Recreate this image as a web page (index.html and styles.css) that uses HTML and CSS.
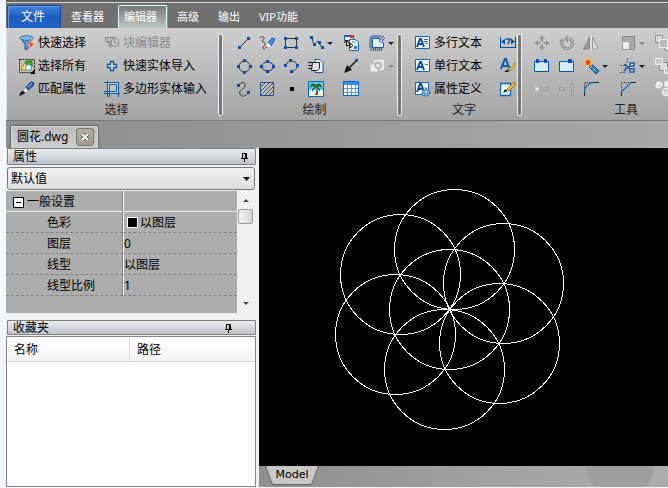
FILE: index.html
```html
<!DOCTYPE html>
<html lang="zh-CN">
<head>
<meta charset="utf-8">
<title>圆花.dwg</title>
<link rel="stylesheet" href="styles.css">
</head>
<body>
<nav class="tabs">
  <button class="file-tab">文件</button>
  <button class="tab">查看器</button>
  <button class="tab active">编辑器</button>
  <button class="tab">高级</button>
  <button class="tab">输出</button>
  <button class="tab">VIP功能</button>
</nav>

<div class="ribbon">
  <section class="group select-group">
    <div class="tools">
      <button class="tool"><svg class="icon" viewBox="0 0 16 16"><path d="M1 3l5 6v5l3 1V9l5-6z" fill="#4c94c8" stroke="#1d5f97"/><ellipse cx="7.500" cy="3" rx="6.500" ry="2.300" fill="#7fbce0" stroke="#2c73a8"/><path d="M13 4L8 10h3l-2 6 7-8h-4l3-4z" fill="#f04636" stroke="#fff" stroke-width=".5"/></svg>快速选择</button>
      <button class="tool off"><svg class="icon" viewBox="0 0 16 16"><path d="M1.500 2.500h9v4h-9z" fill="#bbb" stroke="#888"/><path d="M3 7l3 6 2-1-2-5z" fill="#999"/><circle cx="11" cy="7.500" r="4" fill="#ccc" stroke="#858585"/><path d="M10.500 5v3h3" fill="none" stroke="#888"/></svg>块编辑器</button>
      <button class="tool"><svg class="icon" viewBox="0 0 16 16"><path d="M.5 1.500h15v13H.5z" fill="none" stroke="#222" stroke-dasharray="2 1"/><path d="M7 3h6v6H7z" fill="#43a832" stroke="#19751a"/><path d="M6 4l3 8H2z" fill="#ffe66a" stroke="#ad8616"/><circle cx="9.500" cy="9.500" r="3" fill="#e5f6ff" stroke="#4b91be"/><path d="M11 16h5v-5z" fill="#000"/></svg>选择所有</button>
      <button class="tool"><svg class="icon" viewBox="0 0 16 16"><path d="M6.500 3.500h3v3h3v3h-3v3h-3v-3h-3v-3h3z" fill="#e8f2ff" stroke="#104e9e" stroke-width="1.300"/></svg>快速实体导入</button>
      <button class="tool"><svg class="icon" viewBox="0 0 16 16"><path d="M0 15c1-4 3-6 5-5s2 3-5 5z" fill="#222"/><path d="M4 10l3 2 3-3-3-3z" fill="#f3f3f3" stroke="#777" stroke-width=".7"/><path d="M7 6l5-5 3 1-1 3-5 4z" fill="#2b65b2" stroke="#163d79"/><path d="M9 6l4-4" stroke="#8cc9ff"/></svg>匹配属性</button>
      <button class="tool"><svg class="icon" viewBox="0 0 16 16"><path d="M4 2h10v10H4z" fill="#c9dcf0"/><path d="M6 4h6v6H6z" fill="#c2c4c6"/><path d="M3.500 0v16M0 12.500h16M5.500 4v12M0 10.500h12M0 1.500h14.500V16M5 3.500h7.500V11" fill="none" stroke="#0a57a8"/></svg>多边形实体输入</button>
    </div>
    <h2>选择</h2>
  </section>

  <section class="group draw-group">
    <div class="tools">
      <button class="tool" aria-label="直线"><svg class="icon" viewBox="0 0 16 16"><path class="ink" d="M4 12L12 4"/><path class="node" d="M2 11h3v3H2zM11 2h3v3h-3z"/></svg></button>
      <button class="tool" aria-label="徒手画"><svg class="icon" viewBox="0 0 16 16"><path class="ink" d="M1 3c1-2 4-2 4 0s-3 3-1 4 3 2 1 4-1 3 1 3"/><path d="M9 8l4-5 3 1-4 7z" fill="#3b91ef" stroke="#1d64b2"/><path d="M9 8l3 3-3 2-2-2z" fill="#fff" stroke="#bbb" stroke-width=".6"/><path d="M6 13l1-2 2 2z" fill="#e03838"/></svg></button>
      <button class="tool" aria-label="矩形"><svg class="icon" viewBox="0 0 16 16"><path class="ink" d="M2.500 3.500h11v9h-11z"/><path class="node" d="M1 2h3v3H1zM12 2h3v3h-3zM1 11h3v3H1zM12 11h3v3h-3z"/></svg></button>
      <button class="tool" aria-label="多段线"><svg class="icon" viewBox="0 0 16 16"><path class="ink" d="M4 3l2 7 4-4 4 7"/><path class="node" d="M2 1h3v3H2zM5 8h3v3H5zM10 6h3v3h-3zM13 11h3v3h-3z"/></svg><i class="arrow"></i></button>
      <button class="tool" aria-label="插入块"><svg class="icon" viewBox="0 0 16 16"><path d="M1.500.5h9v5h-9z" fill="#fff" stroke="#1564ba"/><path d="M1 0h6v2H1z" fill="#1564ba"/><path d="M7 0h4v3H7z" fill="#e43127"/><path d="M6.500 4.500h6l3 3v8h-9z" fill="#edf5ff" stroke="#1564ba"/><path d="M3.500 5v5.500H7M1 8l2.500-3L6 8M7 8v5l3-2.500z" fill="none" stroke="#111"/><path d="M11 11h3v3h-3z" fill="#2b7ad2"/><path d="M9 7h3" stroke="#2b7ad2"/></svg></button>
      <button class="tool" aria-label="创建块"><svg class="icon" viewBox="0 0 16 16"><path d="M2 1v2M4 0v3M6 0v3M8 0v3M10 0v3M12 0v2M0 4h3M0 6h3M0 8h3M0 10h3M0 12h3M3 13l-2 3M5 13l-1 3M7 13l-1 3M9 13l-1 3M11 13l-1 3M13 13l-1 3M11 5l4-4M13 6l3-3" stroke="#1b4e91"/><path d="M3.500 3.500h7c-1 3 1 4 4 4v5h-11z" fill="#e9f3ff" stroke="#0c61bf"/></svg><i class="arrow"></i></button>

      <button class="tool" aria-label="圆"><svg class="icon" viewBox="0 0 16 16"><circle class="ink" cx="8.500" cy="8.500" r="5.500"/><path class="node" d="M7 1h3v3H7zM7 13h3v3H7zM1 7h3v3H1zM13 7h3v3h-3z"/></svg></button>
      <button class="tool" aria-label="椭圆"><svg class="icon" viewBox="0 0 16 16"><ellipse class="ink" cx="8.500" cy="8.500" rx="6" ry="4.500"/><path class="node" d="M7 2h3v3H7zM7 12h3v3H7zM1 7h3v3H1zM13 7h3v3h-3z"/></svg></button>
      <button class="tool" aria-label="圆弧"><svg class="icon" viewBox="0 0 16 16"><path class="ink" d="M3 7c2-6 11-5 11 1 0 4-3 5-6 5"/><path class="node" d="M1 6h3v3H1zM6 1h3v3H6zM13 6h3v3h-3zM7 12h3v3H7z"/></svg></button>
      <button class="tool" aria-label="多行"><svg class="icon" viewBox="0 0 16 16"><path d="M7 1.500h5l3 3v10H7z" fill="#e6f2ff" stroke="#1b5ca9"/><path d="M4.500 4.500h7v6l-2 2h-6z" fill="#e2e2e2" stroke="#222"/><path d="M0 4.500h4M0 7.500h4M0 10.500h4" stroke="#222"/></svg></button>
      <button class="tool" aria-label="箭头"><svg class="icon" viewBox="0 0 16 16"><path d="M4 12l9-9" stroke="#111" stroke-width="1.500"/><path d="M1 15l3-8 5 5z" fill="#111"/><path class="node" d="M12 1h3v3h-3z"/></svg></button>
      <button class="tool off" aria-label="区域"><svg class="icon" viewBox="0 0 16 16"><path d="M5.500 2.500h9v9h-9z" fill="#ddd" stroke="#f0f0f0"/><path d="M1 6h8v8H1z" fill="#ececec" stroke="#bbb"/><circle cx="9" cy="7.500" r="3" fill="#ddd" stroke="#999"/></svg><i class="arrow"></i></button>

      <button class="tool" aria-label="样条曲线"><svg class="icon" viewBox="0 0 16 16"><path class="ink" d="M3 4c2-4 7-3 6 1S2 9 4 13s6 2 8-1"/><path class="node" d="M1 3h3v3H1zM11 10h3v3h-3z"/></svg></button>
      <button class="tool" aria-label="填充"><svg class="icon" viewBox="0 0 16 16"><path d="M1.500 1.500h13v13h-13z" fill="#c4c4c4" stroke="#164f94"/><path d="M2 6l4-4M2 10l8-8M2 14L14 2M6 14l8-8M10 14l4-4" stroke="#444"/></svg></button>
      <button class="tool" aria-label="点"><svg class="icon" viewBox="0 0 16 16"><path d="M7 6h4v4H7z"/></svg></button>
      <button class="tool" aria-label="图像"><svg class="icon" viewBox="0 0 16 16"><path d="M.5.500h15v15H.5z" fill="#dff5ff" stroke="#0667bd"/><path d="M1 1h14v8H1z" fill="#6cc3ea"/><path d="M1 13h14v2H1z" fill="#f6f4c6"/><path d="M8 5c1 4 0 7-1 9h3c0-3 0-6-1-9" fill="#754e20"/><path d="M8 4C5 1 2 3 2 7c2-2 3-2 5-1-3 1-3 3-3 5 2-3 3-4 5-5 1 2 2 3 3 5 0-2 0-4-2-5 2-1 3 0 4 2 0-5-3-7-6-4z" fill="#156b35"/></svg></button>
      <button class="tool" aria-label="表格"><svg class="icon" viewBox="0 0 16 16"><path d="M.5.500h15v14H.5z" fill="#fff" stroke="#0867c9"/><path d="M1 1h14v3H1z" fill="#2f8eea"/><path d="M1 7.500h14M1 11.500h14M4.500 4v10M8.500 4v10M12.500 4v10" stroke="#509fe4"/></svg></button>
    </div>
    <h2>绘制</h2>
  </section>

  <section class="group text-group">
    <div class="tools">
      <button class="tool"><svg class="icon" viewBox="0 0 16 16"><path class="sheet" d="M.5 1.500h14v12H.5z"/><path class="letter" d="M2 12l3-8h1l3 8M3 9h5"/><path d="M9 4.500h4M9 6.500h4M10 8.500h3" stroke="#3273b8"/></svg>多行文本</button>
      <button class="tool" aria-label="标注"><svg class="icon" viewBox="0 0 16 16"><path d="M.5 2v11M15.500 2v11M0 12.500h16" stroke="#0750a5"/><path d="M1 6.500l4-3v6zM15 6.500l-4-3v6z" fill="#0750a5"/><path d="M6 4h4L8 9" fill="none" stroke="#0750a5" stroke-width="1.500"/></svg></button>
      <button class="tool"><svg class="icon" viewBox="0 0 16 16"><path class="sheet" d="M.5 1.500h14v12H.5z"/><path class="letter" d="M2 12l3-8h1l3 8M3 9h5"/><path d="M10 6.500h3" stroke="#3273b8"/></svg>单行文本</button>
      <button class="tool" aria-label="文字样式"><svg class="icon" viewBox="0 0 16 16"><path d="M1 11L5 1h1l3 9M3 8h5" fill="none" stroke="#0759b0" stroke-width="2"/><path d="M4 14l4-3 1 3z" fill="#222"/><path d="M9 11l6-6 1 2-6 6z" fill="#f8bd2c" stroke="#8b5b12" stroke-width=".6"/></svg></button>
      <button class="tool"><svg class="icon" viewBox="0 0 16 16"><path class="sheet" d="M.5 1.500h13v12H.5z"/><path class="letter" d="M2 11l3-8h1l3 8M3 8h5"/><circle cx="11" cy="11" r="3.500" fill="#eaf5ff" stroke="#276eb9" stroke-width="2" stroke-dasharray="2 1"/><circle cx="11" cy="11" r="2" fill="#c6e2fa" stroke="#276eb9"/></svg>属性定义</button>
      <button class="tool" aria-label="编辑文字"><svg class="icon" viewBox="0 0 16 16"><path d="M.5 2.500h10v12H.5z" fill="#edf7ff" stroke="#1163b7" stroke-width="1.300"/><path d="M3 12l2-4 3 2z" fill="#222"/><path d="M7 8l7-7 2 2-7 7z" fill="#f6b92c" stroke="#8a5919" stroke-width=".7"/></svg></button>
    </div>
    <h2>文字</h2>
  </section>

  <section class="group edit-group">
    <div class="tools">
      <button class="tool off" aria-label="移动"><svg class="icon" viewBox="0 0 16 16"><path d="M8 3v10M3 8h10" stroke="#888" stroke-width="1.500"/><path d="M5 4l3-4 3 4zM5 12l3 4 3-4zM4 5L0 8l4 3zM12 5l4 3-4 3z" fill="#999"/><path d="M6.500 6.500h3v3h-3z" fill="#ccc"/></svg></button>
      <button class="tool off" aria-label="旋转"><svg class="icon" viewBox="0 0 16 16"><path d="M2.500 7c0 9 11 9 11 1 0-3-2-4-4-4" fill="none" stroke="#909090" stroke-width="3"/><path d="M2.500 7c0 9 11 9 11 1 0-3-2-4-4-4" fill="none" stroke="#bbb"/><path d="M9 0v8L5 4zM0 7l3-4 3 4z" fill="#999"/></svg></button>
      <button class="tool off" aria-label="镜像"><svg class="icon" viewBox="0 0 16 16"><path d="M6.500 2v12h-6z" fill="#999" stroke="#888"/><path d="M9.500 2v12h6z" fill="#ddd" stroke="#999"/><path d="M8 0v16" stroke="#eee"/></svg></button>
      <button class="tool off" aria-label="缩放"><svg class="icon" viewBox="0 0 16 16"><path d="M2.500 1.500h12v13h-12z" fill="#aaa" stroke="#888"/><path d="M2.500 6.500h7v8h-7z" fill="#eee" stroke="#777" stroke-dasharray="1 1"/></svg><i class="arrow"></i></button>
      <button class="tool off" aria-label="前置"><svg class="icon" viewBox="0 0 16 16"><path class="gray" d="M.5.500h7v7h-7zM9.500 9.500h6v6h-6z"/><path d="M4.500 4.500h8v8h-8z" fill="#bbb" stroke="#eee"/></svg></button>

      <button class="tool" aria-label="组合"><svg class="icon" viewBox="0 0 16 16"><path d="M.5 3.500h14v10H.5z" fill="#d6eaff" stroke="#0b55ad"/><path class="node" d="M2 1h3v4H2zM10 1h3v4h-3z"/></svg></button>
      <button class="tool" aria-label="解组"><svg class="icon" viewBox="0 0 16 16"><path d="M.5 3.500h14v10H.5z" fill="#d6eaff" stroke="#0b55ad"/><path class="node" d="M9 1h4v4H9z"/></svg></button>
      <button class="tool" aria-label="分解"><svg class="icon" viewBox="0 0 16 16"><circle cx="5" cy="4.500" r="3.500" fill="#f36a24" stroke="#ffd35e" stroke-width="2" stroke-dasharray="2 1"/><circle cx="5" cy="4.500" r="2" fill="#e0401c"/><path d="M6 9l4-2 6 6-3 3z" fill="#3387ba" stroke="#124f7c"/><path d="M9 8l-2 2M12 11l-2 2" stroke="#a7dcfa"/></svg><i class="arrow"></i></button>
      <button class="tool" aria-label="修剪"><svg class="icon shift" viewBox="0 0 16 16"><path d="M8 0L4 14M0 7.500h5M0 14.500h5" stroke="#555" stroke-dasharray="2 1"/><path d="M4 6l7 6M4 13l7-6" stroke="#165aa7" stroke-width="1.500"/><path d="M10 5h4v3h-4zM10 11h4v3h-4z" fill="#fff" stroke="#165aa7" stroke-width="1.500"/></svg><i class="arrow"></i></button>
      <button class="tool off" aria-label="后置"><svg class="icon" viewBox="0 0 16 16"><path class="gray" d="M4.500 4.500h8v8h-8z"/><path d="M.5.500h7v6h-7zM9.500 9.500h6v6h-6z" fill="#ccc" stroke="#eee"/></svg></button>

      <button class="tool off" aria-label="打断"><svg class="icon" viewBox="0 0 16 16"><path d="M1.500 6.500h3v3h-3z" fill="#f4f4f4" stroke="#ccc"/><path d="M11.500 6.500h3v3h-3z" fill="#bbb" stroke="#999"/><path d="M6 6.500h4M6 9.500h4" stroke="#999" stroke-dasharray="1 1"/></svg></button>
      <button class="tool off" aria-label="延伸"><svg class="icon" viewBox="0 0 16 16"><path d="M.5 6.500h4v3h-4zM12.500 2.500h2v12h-2z" fill="#bbb" stroke="#999"/><path d="M6 6.500h6M6 9.500h6" stroke="#999" stroke-dasharray="1 1"/></svg></button>
      <button class="tool" aria-label="圆角"><svg class="icon" viewBox="0 0 16 16"><path d="M1.500 11V1.500H10" fill="none" stroke="#333" stroke-dasharray="1 1"/><path d="M1.500 15v-4M11 1.500h5" stroke="#222"/><path d="M1.500 11C2 5 5 2 11 1.500" fill="none" stroke="#1677d5" stroke-width="1.500"/></svg></button>
      <button class="tool" aria-label="倒角"><svg class="icon" viewBox="0 0 16 16"><path d="M1.500 11V1.500H10" fill="none" stroke="#333" stroke-dasharray="1 1"/><path d="M1.500 15v-4M11 1.500h5" stroke="#222"/><path d="M1.500 11L11 1.500" stroke="#1677d5" stroke-width="1.500"/></svg></button>
      <button class="tool off" aria-label="对齐"><svg class="icon" viewBox="0 0 16 16"><circle cx="4" cy="4" r="3.500" fill="#eee"/><circle cx="12" cy="3" r="3" fill="#eee"/><circle cx="11" cy="11" r="4" fill="#ddd" stroke="#eee"/><path d="M4 4l7 7" stroke="#aaa"/></svg></button>
    </div>
    <h2>工具</h2>
  </section>
</div>

<div class="documents">
  <div class="document">
    <span>圆花.dwg</span>
    <button class="close" aria-label="关闭"><svg viewBox="0 0 10 10"><path d="M2 2l6 6M8 2L2 8" stroke="#555" stroke-width="3.500"/><path d="M2 2l6 6M8 2L2 8" stroke="#fff" stroke-width="2"/></svg></button>
  </div>
</div>

<main class="workspace">
  <aside class="side">
    <section class="properties">
      <header class="panel-title"><h2>属性</h2><button class="pin" aria-label="固定属性"><svg viewBox="0 0 9 10"><path d="M2.500 6V1.500h4V6M5.500 1v5M1 6.500h7M4.500 6v4" fill="none" stroke="#000"/></svg></button></header>
      <select class="preset" aria-label="属性预设"><option>默认值</option></select>
      <div class="property-box">
        <div class="property-list">
          <table>
            <tbody>
              <tr class="category"><th scope="row"><button class="collapse" aria-label="折叠"></button>一般设置</th><td></td></tr>
              <tr><th scope="row">色彩</th><td><span class="swatch"></span>以图层</td></tr>
              <tr><th scope="row">图层</th><td>0</td></tr>
              <tr><th scope="row">线型</th><td>以图层</td></tr>
              <tr><th scope="row">线型比例</th><td>1</td></tr>
            </tbody>
          </table>
        </div>
        <div class="scrollbar"><i class="up"></i><span class="thumb"></span><i class="down"></i></div>
      </div>
    </section>
    <section class="favorites">
      <header class="panel-title"><h2>收藏夹</h2><button class="pin" aria-label="固定收藏夹"><svg viewBox="0 0 9 10"><path d="M2.500 6V1.500h4V6M5.500 1v5M1 6.500h7M4.500 6v4" fill="none" stroke="#000"/></svg></button></header>
      <div class="favorite-list">
        <table><thead><tr><th scope="col">名称</th><th scope="col">路径</th></tr></thead></table>
      </div>
    </section>
  </aside>
  <div class="view">
    <svg class="drawing" role="img" aria-label="圆花">
      <g fill="none" stroke="#fff" shape-rendering="crispEdges">
        <circle cx="190.500" cy="161.500" r="60"/>
        <circle cx="195.500" cy="101.500" r="60"/>
        <circle cx="244.500" cy="135.500" r="60"/>
        <circle cx="240.500" cy="195.500" r="60"/>
        <circle cx="185.500" cy="221.500" r="60"/>
        <circle cx="136.500" cy="186.500" r="60"/>
        <circle cx="141.500" cy="126.500" r="60"/>
      </g>
    </svg>
    <footer class="layouts"><button class="layout-tab"><span>Model</span></button></footer>
  </div>
</main>
</body>
</html>
```

FILE: styles.css
```css
* { box-sizing: border-box; }
body {
  margin: 0;
  padding: 0 0 1px 6px;
  height: 100vh;
  display: flex;
  flex-direction: column;
  overflow: hidden;
  background: #f3f6fc;
  color: #000;
  font: 12px/16px "Noto Sans", "Noto Sans CJK SC", sans-serif;
}
button { margin: 0; padding: 0; border: 0; background: none; color: inherit; font: inherit; }
h2 { margin: 0; font: inherit; }
table { width: 100%; border-collapse: separate; border-spacing: 0; table-layout: fixed; }
th, td { padding: 0; font-weight: normal; text-align: left; }

.tabs {
  display: flex;
  flex: none;
  align-items: flex-end;
  height: 28px;
  padding-left: 1px;
  background: linear-gradient(#646464 2px, #d8d8d8 2px, #d8d8d8 3px, #707070 3px);
  color: #fff;
  font-size: 11px;
}
.file-tab {
  width: 54px;
  height: 23px;
  padding-right: 2px;
  border: 1px solid #1647a0;
  border-bottom: 0;
  border-radius: 2px 2px 0 0;
  background: linear-gradient(#3f83dc, #1e5dbb 50%, #1d62ca);
  box-shadow: inset 1px 1px #6399e0;
  font-size: 12px;
}
.tab { height: 23px; padding: 0 9px 0 10px; }
.tab.active {
  margin: 0 0 0 5px;
  padding: 0 9px 0 5px;
  border: solid #dffcff;
  border-width: 1px 1px 0 1px;
  border-radius: 2px 2px 0 0;
  background: linear-gradient(#777, #bfc5c5);
  box-shadow: 1px 0 #8a8a8a;
}

.ribbon {
  display: flex;
  flex: none;
  height: 93px;
  border-bottom: 1px solid #777;
  overflow: hidden;
  background: linear-gradient(#cfcfcf, #bbb 45%, #a4a4a4);
  box-shadow: inset 1px 0 #ddd;
}
.group { position: relative; flex: none; padding-top: 4px; }
.group:not(:last-child)::after {
  content: "";
  position: absolute;
  top: 6px;
  right: 0;
  bottom: 4px;
  width: 3px;
  border: 1px solid #eef2f8;
  border-radius: 2px;
  background: #777;
}
.group h2 { height: 18px; padding-left: 4px; line-height: 18px; text-align: center; color: #222; }
.tools { display: grid; grid-auto-rows: 23px; }
.select-group { width: 217px; }
.select-group .tools { padding-left: 13px; grid-template-columns: 85px 1fr; }
.draw-group { width: 179px; }
.draw-group .tools { padding-left: 13px; grid-template-columns: 23px 24px 25px 35px 26px 1fr; }
.text-group { width: 120px; }
.text-group .tools { padding-left: 13px; grid-template-columns: 85px 1fr; }
.edit-group { width: 204px; }
.edit-group .tools { padding-left: 12px; grid-template-columns: 25px 24px 37px 35px 16px; }
.tool { display: flex; align-items: flex-start; gap: 3px; padding-top: 3px; white-space: nowrap; }
.tool.off { color: #8a8a8a; }
.icon { flex: none; width: 16px; height: 16px; }
.ink { fill: none; stroke: #333; }
.node { fill: #0752b4; }
.sheet { fill: #eff7ff; stroke: #1764b6; }
.letter { fill: none; stroke: #0a4e9e; stroke-width: 2; }
.gray { fill: #d8d8d8; stroke: #8f8f8f; }
.arrow { margin-top: 7px; border: solid transparent; border-width: 3px 3px 0; border-top-color: #222; }
.off .arrow { border-top-color: #888; }

.documents {
  display: flex;
  flex: none;
  align-items: flex-end;
  height: 27px;
  padding-left: 4px;
  background: linear-gradient(90deg, #8d8d8d, #a8a8a8);
}
.document {
  display: flex;
  align-items: center;
  height: 23px;
  padding: 0 4px 0 6px;
  gap: 8px;
  border: 1px solid #666;
  border-bottom: 0;
  border-radius: 2px 2px 0 0;
  background: linear-gradient(#bbb, #cecece);
  box-shadow: inset 1px 1px #ddd, inset -1px 0 #ddd;
}
.close {
  display: flex;
  align-items: center;
  justify-content: center;
  width: 18px;
  height: 18px;
  border: 1px solid #777;
  border-radius: 3px;
  background: linear-gradient(#b5ae9a, #a39c89);
}
.close svg { width: 10px; height: 10px; }

.workspace { display: flex; flex: 1; min-height: 0; background: #f0f0f0; }
.side { display: flex; flex: none; flex-direction: column; width: 253px; padding-right: 3px; }
.properties { flex: none; }
.panel-title {
  display: flex;
  align-items: center;
  justify-content: space-between;
  height: 17px;
  margin-left: 1px;
  padding: 0 6px 0 5px;
  border: 1px solid #808080;
  border-radius: 1px;
  background: linear-gradient(#e8ebee, #bfc4ca);
}
.pin { display: flex; }
.pin svg { width: 9px; height: 10px; }
.preset {
  display: block;
  width: calc(100% - 2px);
  height: 23px;
  margin: 2px 1px 0;
  padding: 0 3px;
  appearance: none;
  border: 1px solid #777;
  border-radius: 3px;
  background:
    url("data:image/svg+xml,%3Csvg xmlns='http://www.w3.org/2000/svg' width='7' height='4'%3E%3Cpath d='M0 0h7L3.500 4z'/%3E%3C/svg%3E") calc(100% - 4px) 9px no-repeat,
    linear-gradient(#f4f4f4, #dcdcdc);
  color: #000;
  font: inherit;
}
.property-box { display: flex; height: 122px; margin: 1px 2px 0 0; }
.property-list { flex: 1; background: #adadad; }
.property-list th, .property-list td { height: 21px; padding-top: 2px; border-bottom: 1px dashed #808080; }
.property-list th { width: 117px; padding-left: 41px; border-right: 1px solid #808080; }
.property-list td { border-left: 1px solid #fff; }
.property-list .category th, .property-list .category td { border-bottom: 1px solid #eee; }
.property-list .category th { padding-left: 7px; }
.collapse {
  width: 11px;
  height: 11px;
  margin-right: 3px;
  vertical-align: -1px;
  border: 1px solid #000;
  background: linear-gradient(#000, #000) center / 5px 1px no-repeat #fff;
}
.swatch {
  display: inline-block;
  width: 11px;
  height: 11px;
  margin: 0 2px 0 3px;
  vertical-align: -1px;
  border: 1px solid #fff;
  background: #000;
}
.scrollbar {
  display: flex;
  flex-direction: column;
  align-items: center;
  width: 17px;
  padding: 8px 0;
  background: #f0f0f0;
}
.up, .down { border: solid transparent; border-width: 0 3px 3px; border-bottom-color: #444; }
.down { margin-top: auto; border-width: 3px 3px 0; border-top-color: #444; }
.thumb {
  width: 15px;
  height: 15px;
  margin-top: 7px;
  border: 1px solid #979797;
  border-radius: 2px;
  background: linear-gradient(90deg, #f3f3f3, #d5d5d5);
}
.favorites { display: flex; flex: 1; flex-direction: column; min-height: 0; margin-top: 7px; }
.favorites .panel-title { height: 15px; padding-right: 22px; }
.favorite-list { flex: 1; margin-top: 1px; border: 1px solid #828790; background: #fff; }
.favorite-list th {
  height: 25px;
  padding: 2px 0 0 7px;
  border-bottom: 1px solid #d5d5d5;
  background: linear-gradient(#fff, #f3f4f6);
}
.favorite-list th:first-child { width: 123px; border-right: 1px solid #dedfe1; }

.view { display: flex; flex: 1; flex-direction: column; min-width: 0; background: #000; }
.drawing { display: block; flex: 1; width: 100%; min-height: 0; }
.layouts {
  display: flex;
  flex: none;
  height: 21px;
  padding-left: 6px;
  background:
    radial-gradient(circle at calc(100% - 48px) 0, #9e9e9e 33px, transparent 34px),
    linear-gradient(90deg, #8f8f8f, #a2a2a2 60%, #adadad);
}
.layout-tab {
  position: relative;
  width: 54px;
  height: 19px;
  padding-bottom: 2px;
  background: #666;
  clip-path: polygon(0 0, 100% 0, 87% 100%, 13% 100%);
  font: 11px/16px "DejaVu Sans", sans-serif;
}
.layout-tab::before {
  content: "";
  position: absolute;
  inset: 0 1px 1px;
  background: #c8c8c8;
  clip-path: polygon(0 0, 100% 0, 87% 100%, 13% 100%);
}
.layout-tab span { position: relative; }
```
